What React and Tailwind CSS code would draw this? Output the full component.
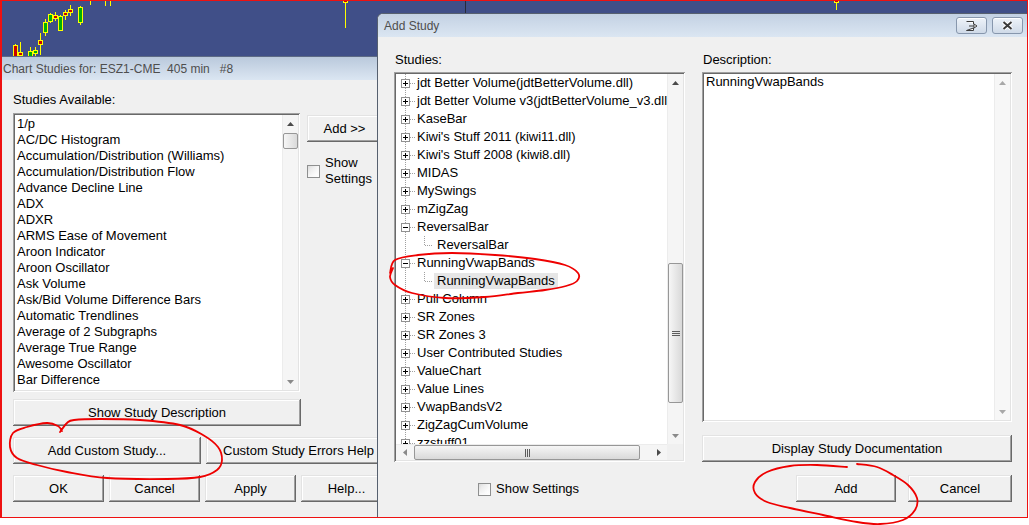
import React from "react";

// Smooth closed-ish freehand stroke through a list of points (Catmull-Rom -> cubic Bezier)
function smoothPath(pts) {
  let d = `M${pts[0][0]},${pts[0][1]}`;
  for (let i = 0; i < pts.length - 1; i++) {
    const p0 = pts[i - 1] || pts[i];
    const p1 = pts[i];
    const p2 = pts[i + 1];
    const p3 = pts[i + 2] || p2;
    const c1 = [p1[0] + (p2[0] - p0[0]) / 6, p1[1] + (p2[1] - p0[1]) / 6];
    const c2 = [p2[0] - (p3[0] - p1[0]) / 6, p2[1] - (p3[1] - p1[1]) / 6];
    d += ` C${c1[0]},${c1[1]} ${c2[0]},${c2[1]} ${p2[0]},${p2[1]}`;
  }
  return d;
}

const raised =
  "shadow-[inset_-1px_-1px_0_#696969,inset_1px_1px_0_#e3e3e3,inset_-2px_-2px_0_#a0a0a0,inset_2px_2px_0_#ffffff]";
const sunken =
  "shadow-[inset_1px_1px_0_#a0a0a0,inset_-1px_-1px_0_#ffffff,inset_2px_2px_0_#696969,inset_-2px_-2px_0_#e3e3e3]";

function Button({ className = "", children }) {
  return (
    <div
      className={
        "flex shrink-0 items-center justify-center whitespace-nowrap bg-[#f0f0f0] text-[13px] leading-none text-black " +
        raised +
        " " +
        className
      }
    >
      {children}
    </div>
  );
}

function Checkbox({ className = "" }) {
  return (
    <div
      className={
        "h-[13px] w-[13px] shrink-0 border border-[#8e8f8f] bg-gradient-to-br from-[#dcdcdc] via-[#f7f7f7] to-white p-[2px] " +
        className
      }
    >
      <div className="h-full w-full bg-gradient-to-br from-[#e9e9e9] to-white" />
    </div>
  );
}

function Tri({ dir, color = "#4a4a4a" }) {
  const paths = {
    up: "M0,4 L3.5,0 L7,4 Z",
    down: "M0,0 L7,0 L3.5,4 Z",
    left: "M4,0 L4,7 L0,3.5 Z",
    right: "M0,0 L4,3.5 L0,7 Z",
  };
  const vertical = dir === "up" || dir === "down";
  return (
    <svg width={vertical ? 7 : 4} height={vertical ? 4 : 7} className="block">
      <path d={paths[dir]} fill={color} />
    </svg>
  );
}

function GripH() {
  return (
    <svg width="8" height="7" className="block">
      <path d="M0,1.5 H8 M0,3.5 H8 M0,5.5 H8" stroke="#5c5c5c" strokeWidth="1" />
    </svg>
  );
}

function GripV() {
  return (
    <svg width="7" height="8" className="block">
      <path d="M1.5,0 V8 M3.5,0 V8 M5.5,0 V8" stroke="#5c5c5c" strokeWidth="1" />
    </svg>
  );
}

function Candles() {
  const red = "#c80000";
  const green = "#00b000";
  const yellow = "#ffff00";
  // [left, bodyTop, bodyBottom, wickTop, wickBottom, fill]
  const bars = [
    [13, 45, 58, 44, 58, red],
    [18, 52, 55, 42, 58, red],
    [28, 51, 58, 47, 58, green],
    [33, 50, 53, 47, 58, green],
    [38, 40, 44, 33, 55, red],
    [43, 22, 32, 19, 36, green],
    [48, 14, 21, 13, 23, green],
    [53, 15, 18, 12, 21, red],
    [58, 16, 30, 15, 31, green],
    [63, 12, 15, 10, 20, red],
    [68, 9, 12, 5, 16, red],
    [78, 7, 22, 6, 25, green],
    [343, -3, 2, -3, 28, red],
    [834, -3, 2, -3, 10, red],
  ];
  const wicks = [
    [90, 0, 5],
    [105, 0, 6],
    [110, 0, 6],
  ];
  return (
    <svg width="1028" height="58" className="absolute left-0 top-0 block">
      <line x1="465.5" y1="0" x2="465.5" y2="13" stroke="#262b3a" strokeWidth="1" />
      {wicks.map(([x, a, b], i) => (
        <line key={"w" + i} x1={x + 0.5} y1={a} x2={x + 0.5} y2={b} stroke={yellow} strokeWidth="1" />
      ))}
      {bars.map(([x, t, b, wt, wb, c], i) => (
        <g key={i}>
          <line x1={x + 2.5} y1={wt} x2={x + 2.5} y2={wb} stroke={yellow} strokeWidth="1" />
          <rect x={x + 0.5} y={t + 0.5} width="4" height={b - t} fill={c} stroke={yellow} strokeWidth="1" />
        </g>
      ))}
    </svg>
  );
}

const studies = [
  "1/p",
  "AC/DC Histogram",
  "Accumulation/Distribution (Williams)",
  "Accumulation/Distribution Flow",
  "Advance Decline Line",
  "ADX",
  "ADXR",
  "ARMS Ease of Movement",
  "Aroon Indicator",
  "Aroon Oscillator",
  "Ask Volume",
  "Ask/Bid Volume Difference Bars",
  "Automatic Trendlines",
  "Average of 2 Subgraphs",
  "Average True Range",
  "Awesome Oscillator",
  "Bar Difference",
  "Bar End Time",
];

const tree = [
  ["jdt Better Volume(jdtBetterVolume.dll)", "plus"],
  ["jdt Better Volume v3(jdtBetterVolume_v3.dll)", "plus"],
  ["KaseBar", "plus"],
  ["Kiwi's Stuff 2011 (kiwi11.dll)", "plus"],
  ["Kiwi's Stuff 2008 (kiwi8.dll)", "plus"],
  ["MIDAS", "plus"],
  ["MySwings", "plus"],
  ["mZigZag", "plus"],
  ["ReversalBar", "minus"],
  ["ReversalBar", "child"],
  ["RunningVwapBands", "minus"],
  ["RunningVwapBands", "selected"],
  ["Pull Column", "plus"],
  ["SR Zones", "plus"],
  ["SR Zones 3", "plus"],
  ["User Contributed Studies", "plus"],
  ["ValueChart", "plus"],
  ["Value Lines", "plus"],
  ["VwapBandsV2", "plus"],
  ["ZigZagCumVolume", "plus"],
  ["zzstuff01", "plus"],
];

function TreeRow({ label, kind }) {
  const dot = "#a0a0a0";
  if (kind === "child" || kind === "selected") {
    return (
      <div className="flex h-[18px] items-center whitespace-nowrap">
        <svg width="38" height="18" className="block shrink-0">
          <line x1="9.5" y1="0" x2="9.5" y2="18" stroke={dot} strokeDasharray="1 1" />
          <line x1="28.5" y1="0" x2="28.5" y2="9" stroke={dot} strokeDasharray="1 1" />
          <line x1="29" y1="9.5" x2="37" y2="9.5" stroke={dot} strokeDasharray="1 1" />
        </svg>
        <span className={"px-[3px] " + (kind === "selected" ? "bg-[#e6e6e6]" : "")}>{label}</span>
      </div>
    );
  }
  return (
    <div className="flex h-[18px] items-center whitespace-nowrap">
      <svg width="21" height="18" className="block shrink-0">
        <line x1="9.5" y1="0" x2="9.5" y2="5" stroke={dot} strokeDasharray="1 1" />
        <line x1="9.5" y1="14" x2="9.5" y2="18" stroke={dot} strokeDasharray="1 1" />
        <line x1="14" y1="9.5" x2="19" y2="9.5" stroke={dot} strokeDasharray="1 1" />
        <rect x="5.5" y="5.5" width="8" height="8" fill="#ffffff" stroke="#919191" />
        <line x1="7" y1="9.5" x2="12" y2="9.5" stroke="#000000" />
        {kind === "plus" && <line x1="9.5" y1="7" x2="9.5" y2="12" stroke="#000000" />}
      </svg>
      <span>{label}</span>
    </div>
  );
}

function LeftDialog() {
  return (
    <div className="absolute left-0 top-[56px] flex h-[470px] w-[400px] flex-col bg-[#f0f0f0]">
      <div className="flex h-[24px] shrink-0 items-center whitespace-pre border-t border-[#5d6a85] bg-gradient-to-b from-[#bac9dc] to-[#dbe6f2] pl-[3px] text-[12px] text-[#4e4e4e]">
        Chart Studies for: ESZ1-CME  405 min   #8
      </div>
      <div className="flex flex-col pl-[13px] pt-[12px] text-[13px] leading-[16px] text-black">
        <div>Studies Available:</div>
        <div className="mt-[5px] flex">
          <div className={"flex h-[279px] w-[287px] shrink-0 bg-white p-[2px] " + sunken}>
            <div className="flex-1 overflow-hidden whitespace-nowrap pl-[2px] pt-[1px]">
              {studies.map((s, i) => (
                <div key={i} className="h-[16px]">
                  {s}
                </div>
              ))}
            </div>
            <div className="flex w-[16px] flex-col border-l border-[#ececec] bg-[#f5f5f5]">
              <div className="flex h-[17px] items-center justify-center">
                <Tri dir="up" />
              </div>
              <div className="mt-px h-[16px] rounded-[2px] border border-[#979797] bg-gradient-to-r from-[#f6f6f6] to-[#dadada]" />
              <div className="flex-1" />
              <div className="flex h-[17px] items-center justify-center">
                <Tri dir="down" color="#8a8a8a" />
              </div>
            </div>
          </div>
          <div className="ml-[7px] flex flex-col pt-[2px]">
            <Button className="h-[27px] w-[75px]">Add &gt;&gt;</Button>
            <div className="mt-[13px] flex">
              <Checkbox className="mt-[10px]" />
              <div className="ml-[5px]">
                Show
                <br />
                Settings
              </div>
            </div>
          </div>
        </div>
        <Button className="mt-[7px] h-[27px] w-[288px]">Show Study Description</Button>
        <div className="mt-[11px] flex gap-[5px]">
          <Button className="h-[27px] w-[188px]">Add Custom Study...</Button>
          <Button className="h-[27px] w-[185px]">Custom Study Errors Help</Button>
        </div>
        <div className="mt-[11px] flex gap-[5px]">
          <Button className="h-[27px] w-[91px]">OK</Button>
          <Button className="h-[27px] w-[91px]">Cancel</Button>
          <Button className="h-[27px] w-[91px]">Apply</Button>
          <Button className="h-[27px] w-[91px]">Help...</Button>
        </div>
      </div>
    </div>
  );
}

function TitleButton({ children }) {
  return (
    <div className="flex h-[17px] w-[31px] items-center justify-center rounded-[3px] border border-[#8797ad] bg-gradient-to-b from-[#eef3f9] to-[#cfdae8] shadow-[inset_0_1px_0_#ffffff]">
      {children}
    </div>
  );
}

function RightDialog() {
  return (
    <div className="absolute left-[377px] top-[13px] flex h-[520px] w-[651px] flex-col overflow-hidden rounded-tl-[6px] border-l border-t border-[#56606f] bg-[#f0f0f0]">
      <div className="flex h-[23px] shrink-0 items-center justify-between bg-gradient-to-b from-[#c3d1e3] to-[#dbe6f2] pl-[6px] pr-[5px]">
        <span className="text-[12px] text-[#4e4e4e]">Add Study</span>
        <div className="flex gap-[5px]">
          <TitleButton>
            <svg width="12" height="10" className="block">
              <path d="M0.5,0.5 H7.5 V3 M7.5,7 V9.5 H0.5 Z" fill="#ffffff" stroke="#3c3c3c" />
              <path d="M3,5 H8 V3 L11,5 L8,7 V5" fill="#ffffff" stroke="#3c3c3c" strokeLinejoin="round" />
            </svg>
          </TitleButton>
          <TitleButton>
            <svg width="11" height="9" className="block">
              <path d="M1.5,1 L9.5,8 M9.5,1 L1.5,8" stroke="#ffffff" strokeWidth="4" />
              <path d="M1.5,1 L9.5,8 M9.5,1 L1.5,8" stroke="#3c3c3c" strokeWidth="2" />
            </svg>
          </TitleButton>
        </div>
      </div>
      <div className="flex gap-[17px] pl-[16px] pt-[15px] text-[13px] leading-[16px] text-black">
        <div className="flex flex-col">
          <div className="pl-[1px]">Studies:</div>
          <div className={"mt-[4px] flex h-[390px] w-[291px] flex-col bg-white p-[2px] " + sunken}>
            <div className="flex h-[370px]">
              <div className="w-[271px] overflow-hidden">
                {tree.map(([label, kind], i) => (
                  <TreeRow key={i} label={label} kind={kind} />
                ))}
              </div>
              <div className="flex w-[16px] flex-col border-l border-[#ececec] bg-[#f5f5f5]">
                <div className="flex h-[17px] items-center justify-center">
                  <Tri dir="up" />
                </div>
                <div className="h-[172px]" />
                <div className="flex h-[140px] items-center justify-center rounded-[2px] border border-[#979797] bg-gradient-to-r from-[#f6f6f6] to-[#d9d9d9]">
                  <GripH />
                </div>
                <div className="flex-1" />
                <div className="flex h-[17px] items-center justify-center">
                  <Tri dir="down" color="#8a8a8a" />
                </div>
              </div>
            </div>
            <div className="flex h-[16px]">
              <div className="flex w-[271px] border-t border-[#ececec] bg-[#f5f5f5]">
                <div className="flex w-[17px] items-center justify-center">
                  <Tri dir="left" color="#8a8a8a" />
                </div>
                <div className="ml-px flex w-[226px] items-center justify-center rounded-[2px] border border-[#979797] bg-gradient-to-b from-[#f6f6f6] to-[#d9d9d9]">
                  <GripV />
                </div>
                <div className="flex-1" />
                <div className="flex w-[17px] items-center justify-center">
                  <Tri dir="right" />
                </div>
              </div>
              <div className="w-[16px] bg-[#f0f0f0]" />
            </div>
          </div>
          <div className="ml-[84px] mt-[19px] flex items-center">
            <Checkbox />
            <span className="ml-[5px]">Show Settings</span>
          </div>
        </div>
        <div className="flex flex-col">
          <div className="pl-[1px]">Description:</div>
          <div className={"mt-[4px] flex h-[350px] w-[310px] bg-white p-[2px] " + sunken}>
            <div className="flex-1 pl-[2px]">RunningVwapBands</div>
            <div className="flex w-[16px] flex-col border-l border-[#ececec] bg-[#f7f7f7]">
              <div className="flex h-[17px] items-center justify-center">
                <Tri dir="up" color="#a8a8a8" />
              </div>
              <div className="flex-1" />
              <div className="flex h-[17px] items-center justify-center">
                <Tri dir="down" color="#a8a8a8" />
              </div>
            </div>
          </div>
          <Button className="mt-[13px] h-[27px] w-[310px]">Display Study Documentation</Button>
          <div className="mt-[13px] flex justify-end gap-[12px]">
            <Button className="h-[27px] w-[100px]">Add</Button>
            <Button className="h-[27px] w-[104px]">Cancel</Button>
          </div>
        </div>
      </div>
    </div>
  );
}

function Annotations() {
  const loops = [
    [
      [60, 432], [67, 423], [74, 420], [100, 419], [140, 420], [180, 425], [203, 435], [218, 447],
      [222, 460], [217, 470], [200, 477], [167, 479], [107, 478], [67, 472], [37, 465], [17, 458],
      [10, 447], [13, 433], [27, 427], [47, 423], [58, 426], [62, 431],
    ],
    [
      [390, 273], [395, 260], [418, 255], [452, 253], [495, 255], [535, 259], [565, 265], [578, 273],
      [577, 281], [566, 286], [545, 290], [518, 293], [485, 297], [445, 298], [412, 293], [395, 285],
      [390, 277], [393, 268],
    ],
    [
      [847, 467], [817, 465], [790, 466], [767, 472], [755, 482], [755, 493], [767, 502], [790, 508],
      [823, 515], [857, 522], [880, 524], [903, 520], [915, 510], [917, 498], [908, 485], [893, 475],
      [877, 467], [857, 464],
    ],
  ];
  return (
    <svg width="1029" height="525" className="pointer-events-none absolute left-0 top-0 block">
      {loops.map((p, i) => (
        <path key={i} d={smoothPath(p)} fill="none" stroke="#ee0000" strokeWidth="1.8" strokeLinecap="round" />
      ))}
    </svg>
  );
}

export default function App() {
  return (
    <div className="relative h-[525px] w-[1029px] overflow-hidden bg-white font-['Liberation_Sans',Arial,sans-serif]">
      <div className="relative h-[518px] w-[1028px] overflow-hidden bg-[#404f88]">
        <Candles />
        <LeftDialog />
        <RightDialog />
      </div>
      <div className="pointer-events-none absolute left-0 top-0 h-[518px] w-[1028px] border border-l-2 border-[#ee1111]" />
      <Annotations />
    </div>
  );
}
